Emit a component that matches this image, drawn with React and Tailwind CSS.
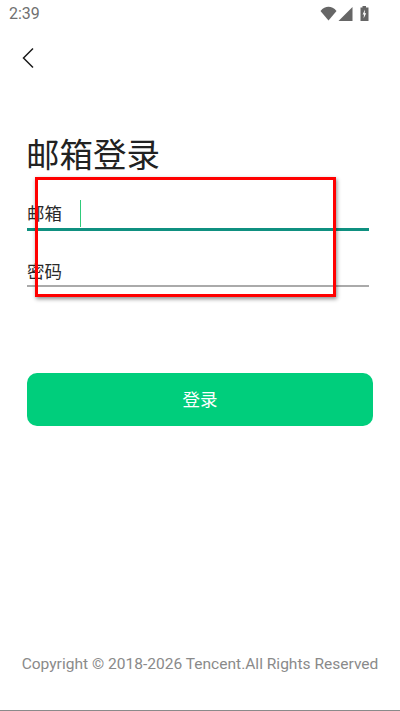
export default function App() {
  return (
    <div className="relative w-[400px] h-[711px] bg-white overflow-hidden flex flex-col font-['Roboto','Noto_Sans_CJK_SC',sans-serif] border-b border-[#8a8a8a]">
      <div className="h-[28px] pl-[9px] pr-[31px] flex items-center justify-between shrink-0">
        <span className="text-[16px] leading-[28px] text-[#707070]">2:39</span>
        <svg width="49" height="16" viewBox="0 0 49 16" className="-mt-[1px]">
          <path d="M0.5 5 C2.8 2.2 5.8 0.8 8.5 0.8 C11.2 0.8 14.2 2.2 16.5 5 L8.5 14.5 Z" fill="#666666" />
          <path d="M18.5 15 L32.5 1 V15 Z" fill="#666666" />
          <path d="M40.5 1.5 H42.5 V0 H46 V1.5 H48.5 V15 H40.5 Z" fill="#666666" />
          <path d="M45 3.5 L42.6 8.6 H44 L43.6 12.5 L46.2 7.2 H44.7 Z" fill="#ffffff" />
        </svg>
      </div>
      <div className="h-[60px] pl-[20px] flex items-center shrink-0">
        <svg width="18" height="22" viewBox="0 0 18 22" fill="none">
          <path d="M13 1.5 L3.5 11 L13 20.5" stroke="#1a1a1a" strokeWidth="1.5" />
        </svg>
      </div>
      <div className="px-[27px] mt-[43px]">
        <h1 className="-ml-[1px] text-[33.5px] leading-[50px] font-normal text-[#222222]">邮箱登录</h1>
        <div className="mr-[4px] mt-[5px] h-[45px] border-b-[3px] border-[#0f9080] flex items-center pt-[14px]">
          <span className="text-[17.5px] leading-[24px] text-[#2a2a2a] w-[53px]">邮箱</span>
          <span className="w-[1px] h-[27px] bg-[#2fcb7b] -mt-[2px]"></span>
        </div>
        <div className="mr-[4px] mt-[14px] h-[42px] border-b-[2px] border-[#aaaaaa] flex items-center pt-[13px]">
          <span className="text-[17.5px] leading-[24px] text-[#2a2a2a]">密码</span>
        </div>
        <button className="mt-[86px] w-full h-[53px] rounded-[10px] bg-[#00ce7c] text-white text-[17.5px] pt-[1px] flex items-center justify-center">登录</button>
      </div>
      <div className="mt-auto mb-[36px] text-center text-[15.55px] leading-[20px] text-[#8a8a8a] whitespace-nowrap">Copyright © 2018-2026 Tencent.All Rights Reserved</div>
      <div className="absolute left-[35px] top-[177px] w-[301px] h-[120px] border-[3px] border-[#ff0000] shadow-[1px_2px_4px_rgba(0,0,0,0.45)]"></div>
    </div>
  );
}
